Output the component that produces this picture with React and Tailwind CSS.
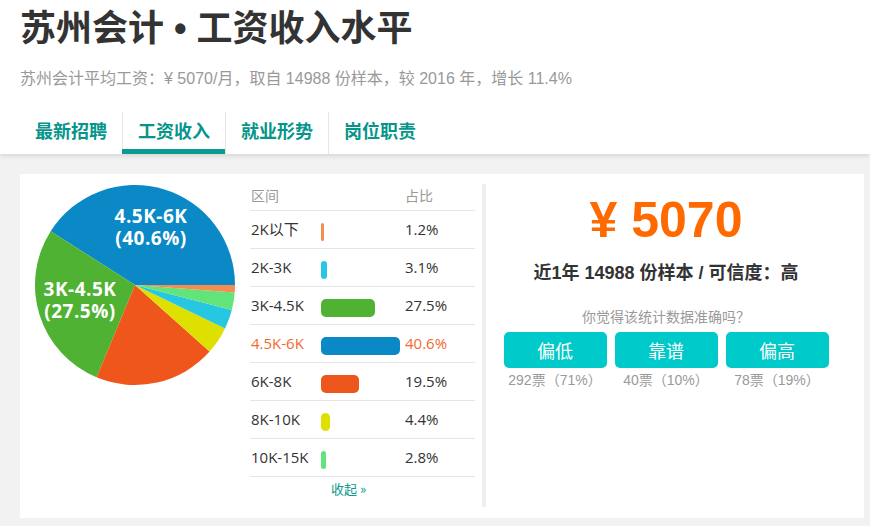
import React from "react";

const SANS = { fontFamily: '"Liberation Sans", "Noto Sans CJK SC", sans-serif' };
const OPEN = { fontFamily: '"Open Sans", "Noto Sans CJK SC", sans-serif' };

const slices = [
  { pct: 40.6, color: "#0a89c6" },
  { pct: 27.5, color: "#4fb233" },
  { pct: 19.5, color: "#ee561c" },
  { pct: 4.4, color: "#dde000" },
  { pct: 3.1, color: "#27c7e2" },
  { pct: 2.8, color: "#62e47b" },
  { pct: 1.2, color: "#f38d52" },
];

const rows = [
  { label: "2K以下", pct: 1.2, color: "#f38d52" },
  { label: "2K-3K", pct: 3.1, color: "#27c7e2" },
  { label: "3K-4.5K", pct: 27.5, color: "#4fb233" },
  { label: "4.5K-6K", pct: 40.6, color: "#0a89c6", hl: true },
  { label: "6K-8K", pct: 19.5, color: "#ee561c" },
  { label: "8K-10K", pct: 4.4, color: "#dde000" },
  { label: "10K-15K", pct: 2.8, color: "#62e47b" },
];

function Pie() {
  const cx = 101, cy = 101, r = 100;
  const total = slices.reduce((s, x) => s + x.pct, 0);
  let a = 0;
  const pt = (deg) => {
    const t = (deg * Math.PI) / 180;
    return [cx + r * Math.cos(t), cy - r * Math.sin(t)];
  };
  const paths = slices.map((s, i) => {
    const span = (s.pct / total) * 360;
    const a1 = a, a2 = a + span;
    a = a2;
    const [x1, y1] = pt(a1);
    const [x2, y2] = pt(a2);
    const large = span > 180 ? 1 : 0;
    const d = `M${cx},${cy} L${x1},${y1} A${r},${r} 0 ${large} 0 ${x2},${y2} Z`;
    return <path key={i} d={d} fill={s.color} />;
  });
  return (
    <svg width="202" height="202" viewBox="0 0 202 202" className="block">
      {paths}
      <g fill="#fff" fontWeight="700" fontSize="19" style={OPEN} textAnchor="middle">
        <text x="117" y="39" letterSpacing="0.5">4.5K-6K</text>
        <text x="117" y="61" letterSpacing="0.5">(40.6%)</text>
        <text x="46" y="112" letterSpacing="0.5">3K-4.5K</text>
        <text x="46" y="134" letterSpacing="0.5">(27.5%)</text>
      </g>
    </svg>
  );
}

const tabs = ["最新招聘", "工资收入", "就业形势", "岗位职责"];

export default function App() {
  return (
    <div className="w-[870px] h-[526px] bg-[#f2f2f2] overflow-hidden" style={SANS}>
      <header className="bg-white px-[20px] pt-[7px] shadow-[0_2px_5px_rgba(0,0,0,0.12)] relative">
        <h1 className="text-[36px] leading-[44px] font-bold text-[#333]">苏州会计 • 工资收入水平</h1>
        <p className="mt-[18px] text-[16px] leading-[20px] text-[#999]">
          苏州会计平均工资：¥ 5070/月，取自 14988 份样本，较 2016 年，增长 11.4%
        </p>
        <nav className="mt-[23px] flex h-[42px]">
          {tabs.map((t, i) => (
            <div
              key={t}
              className={
                "flex flex-col " +
                (i === 0 ? "w-[102px]" : "w-[103px] border-l border-[#e6e6e6]")
              }
            >
              <div className="flex-1 flex items-center justify-center text-[18px] font-bold text-[#06958a]" style={{ fontFamily: '"Noto Sans CJK SC", sans-serif' }}>
                {t}
              </div>
              <div className={"h-[5px] " + (i === 1 ? "bg-[#0a9a8f] -ml-px" : "")} />
            </div>
          ))}
        </nav>
      </header>

      <main className="pt-[20px] px-[20px]">
        <div className="w-[844px] h-[344px] bg-white flex">
          <div className="ml-[14px] mt-[10px]">
            <Pie />
          </div>

          <div className="ml-[14px] mt-[6px] w-[225px]" style={OPEN}>
            <div className="h-[31px] flex items-center border-b border-[#e6e6e6] text-[14px] text-[#999]">
              <span className="pl-[1px] w-[155px]">区间</span>
              <span>占比</span>
            </div>
            {rows.map((r) => (
              <div
                key={r.label}
                className={
                  "h-[38px] flex items-center border-b border-[#e6e6e6] text-[15px] " +
                  (r.hl ? "text-[#f26a2e]" : "text-[#333]")
                }
              >
                <span className="pl-[1px] w-[71px]">{r.label}</span>
                <div className="w-[84px] pt-[4px]">
                  <div
                    className="h-[18px] rounded-[5px]"
                    style={{ width: Math.max(2.5, r.pct * 1.95) + "px", background: r.color }}
                  />
                </div>
                <span>{r.pct}%</span>
              </div>
            ))}
            <div className="pl-[81px] pt-[2px] text-[13px] text-[#0a9a8f]" style={{ fontFamily: '"Noto Sans CJK SC", sans-serif' }}>
              收起 »
            </div>
          </div>

          <div className="ml-[7px] mt-[10px] w-[4px] h-[323px] bg-[#efefef]" />

          <div className="flex-1 pr-[18px] flex flex-col items-center">
            <div className="mt-[21px] text-[50px] leading-[50px] font-bold text-[#ff6a00]">¥ 5070</div>
            <div className="mt-[16px] text-[18px] leading-[24px] font-bold text-[#333]">
              近1年 14988 份样本 / 可信度：高
            </div>
            <div className="mt-[22px] text-[14px] leading-[20px] text-[#999]">你觉得该统计数据准确吗？</div>
            <div className="mt-[5px] flex gap-[8px]">
              {[
                ["偏低", "292票（71%）"],
                ["靠谱", "40票（10%）"],
                ["偏高", "78票（19%）"],
              ].map(([b, v]) => (
                <div key={b} className="w-[103px] flex flex-col items-center">
                  <div className="w-full h-[36px] rounded-[5px] bg-[#00c9c9] text-white text-[18px] flex items-center justify-center" style={{ fontFamily: '"Noto Sans CJK SC", sans-serif' }}>
                    {b}
                  </div>
                  <div className="mt-[2px] text-[14px] leading-[20px] text-[#999]">{v}</div>
                </div>
              ))}
            </div>
          </div>
        </div>
      </main>
    </div>
  );
}
